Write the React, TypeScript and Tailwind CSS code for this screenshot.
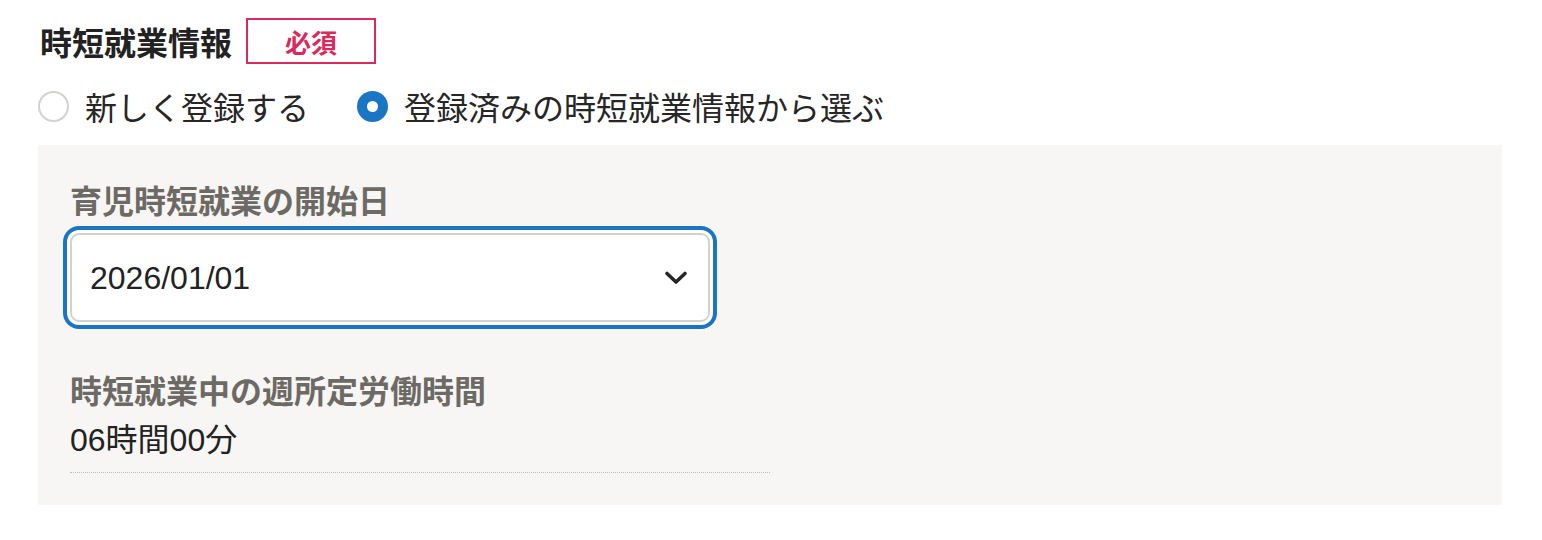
import { useState } from "react";

const font = { fontFamily: '"Noto Sans CJK JP", "Noto Sans", sans-serif' };
const valueFont = { fontFamily: '"Liberation Sans", "Noto Sans CJK JP", sans-serif' };

function Radio({ checked, label, onClick }: { checked: boolean; label: string; onClick: () => void }) {
  return (
    <label className="flex items-center cursor-pointer mr-[48px]" onClick={onClick}>
      {checked ? (
        <span className="w-[31px] h-[31px] rounded-full bg-[#1a76c4] flex items-center justify-center">
          <span className="w-[11px] h-[11px] rounded-full bg-white" />
        </span>
      ) : (
        <span className="w-[31px] h-[31px] rounded-full border-2 border-[#d3d1cd] bg-white" />
      )}
      <span className="ml-[16px] text-[32px] leading-[48px] text-[#262626]">{label}</span>
    </label>
  );
}

export default function App() {
  const [mode, setMode] = useState<"new" | "existing">("existing");

  return (
    <div className="w-[1542px] h-[540px] bg-white pt-[18px] pl-[38px]" style={font}>
      {/* Title */}
      <div className="flex items-center pl-[2px]">
        <h2 className="text-[32px] leading-[46px] font-bold text-[#222]">時短就業情報</h2>
        <span className="ml-[14px] w-[130px] h-[46px] border-2 border-[#d9295d] flex items-center justify-center text-[26px] font-bold text-[#d9295d]">
          必須
        </span>
      </div>

      {/* Radio options */}
      <div className="flex items-center mt-[18px]">
        <Radio checked={mode === "new"} label="新しく登録する" onClick={() => setMode("new")} />
        <Radio checked={mode === "existing"} label="登録済みの時短就業情報から選ぶ" onClick={() => setMode("existing")} />
      </div>

      {/* Panel */}
      <div className="mt-[15px] w-[1464px] bg-[#f7f6f4] pt-[30px] pb-[32px] pl-[32px]">
        <div className="text-[32px] leading-[48px] font-bold text-[#6d6a65]">育児時短就業の開始日</div>
        <div className="mt-[10px] w-[640px] h-[89px] bg-white border-2 border-[#d5d2ce] rounded-[9px] ring-4 ring-[#1a76c4] ring-offset-[3px] ring-offset-white flex items-center justify-between pl-[18px] pr-[20px]">
          <span className="text-[32px] text-[#222]" style={valueFont}>2026/01/01</span>
          <svg width="24" height="16" viewBox="0 0 24 16" fill="none">
            <polyline points="3,3.5 12,12 21,3.5" stroke="#262626" strokeWidth="3.6" strokeLinecap="round" strokeLinejoin="round" />
          </svg>
        </div>

        <div className="mt-[43px] text-[32px] leading-[48px] font-bold text-[#6d6a65]">時短就業中の週所定労働時間</div>
        <div
          className="mt-[3px] w-[700px] pb-[8px] border-b border-dotted border-[#bebcb8] text-[32px] leading-[48px] text-[#222]"
          style={valueFont}
        >
          06時間00分
        </div>
      </div>
    </div>
  );
}
